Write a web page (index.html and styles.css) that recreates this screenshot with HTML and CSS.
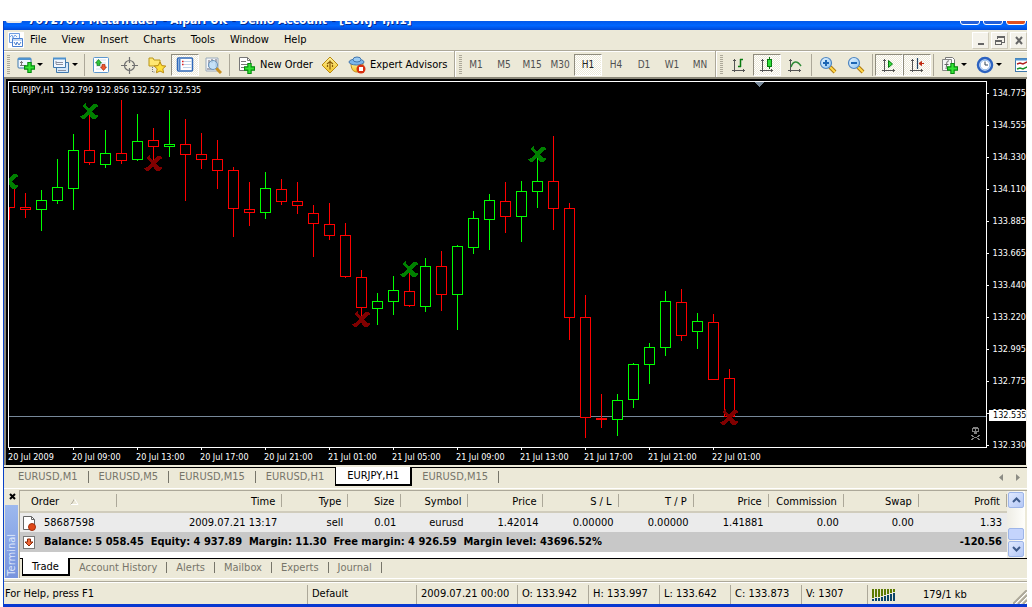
FILE: index.html
```html
<!DOCTYPE html>
<html lang="en">
<head>
<meta charset="utf-8">
<title>MetaTrader - Alpari UK - Demo Account - [EURJPY,H1]</title>
<link rel="stylesheet" href="styles.css">
</head>
<body>
<svg class="defs" aria-hidden="true">
  <defs>
    <linearGradient id="glass" x1="0" y1="0" x2="1" y2="1"><stop offset="0" stop-color="#e8f6ff"/><stop offset="1" stop-color="#8cc4f4"/></linearGradient>
    <linearGradient id="gold" x1="0" y1="0" x2="0" y2="1"><stop offset="0" stop-color="#fff3a0"/><stop offset="1" stop-color="#f0c020"/></linearGradient>
    <symbol id="plus" viewBox="0 0 10 10"><path d="M3.500.5h3v3h3v3h-3v3h-3v-3h-3v-3h3z" fill="#35e535" stroke="#078a10"/></symbol>
    <symbol id="axes" viewBox="0 0 16 16"><path d="M3.500 2v13M1 13.500h13M2 3.500h3M12.500 12v3" fill="none" stroke="#555"/></symbol>
    <symbol id="lens" viewBox="0 0 18 18"><path d="M11 11l5 5" stroke="#b07a10" stroke-width="4"/><path d="M11 11l5 5" stroke="#ffd84a" stroke-width="2"/><circle cx="7" cy="7" r="5.500" fill="url(#glass)" stroke="#4f86c0" stroke-width="1.200"/></symbol>
  </defs>
</svg>
<main class="window">
  <header class="titlebar">
    <span class="app-mark"></span>
    <h1>7072767: MetaTrader - Alpari UK - Demo Account - [EURJPY,H1]</h1>
    <div class="window-buttons">
      <button type="button" aria-label="Minimize"><i></i></button>
      <button type="button" aria-label="Maximize"><i></i></button>
      <button type="button" class="close" aria-label="Close"><i></i></button>
    </div>
  </header>

  <nav class="menubar" aria-label="Main menu">
    <svg class="menu-logo" width="16" height="16" viewBox="0 0 16 16"><rect width="16" height="16" fill="#fff"/><path d="M1.500 1.500h10v9h-10z" fill="#f4f9ff" stroke="#6c9be0"/><path d="M2 5l2-2 1 3 2-3 2 2" fill="none" stroke="#7aa6e6"/><path d="M4.500 6.500h10v8h-10z" fill="#fff" stroke="#4a80d0"/><path d="M5 8h9" stroke="#8ab4ee"/><path d="M6 10l2 3 1-3 2 3 2-3" fill="none" stroke="#4a80d0"/></svg>
    <button type="button">File</button><button type="button">View</button><button type="button">Insert</button><button type="button">Charts</button><button type="button">Tools</button><button type="button">Window</button><button type="button">Help</button>
    <div class="child-buttons">
      <button type="button" aria-label="Minimize chart"><svg width="16" height="16"><path d="M5 11h6" stroke="#666" stroke-width="2"/></svg></button>
      <button type="button" aria-label="Restore chart"><svg width="16" height="16" shape-rendering="crispEdges"><path d="M5 6V4h7v5h-2" fill="none" stroke="#666"/><path d="M5 4h8" stroke="#666" stroke-width="2"/><path d="M3.500 7.500h6v4h-6z" fill="none" stroke="#666"/><path d="M3 8h7" stroke="#666" stroke-width="2"/></svg></button>
      <button type="button" aria-label="Close chart"><svg width="16" height="16"><path d="M5 4l6 7M11 4l-6 7" stroke="#666" stroke-width="2"/></svg></button>
    </div>
  </nav>

  <div class="toolbar" role="toolbar" aria-label="Standard">
    <div class="band">
      <i class="grip"></i>
      <button type="button" class="drop" aria-label="New chart"><svg width="18" height="18"><rect x="1" y="2" width="13" height="10" rx="1" fill="#eef6ff" stroke="#3f78ad"/><path d="M1 3h13" stroke="#4f93cf" stroke-width="2"/><path d="M4.500 5v5M3 9.500h6M3 6.500h3" stroke="#777" fill="none"/><use href="#plus" x="7" y="6" width="11" height="11"/></svg><i class="arrow"></i></button>
      <button type="button" class="drop" aria-label="Profiles"><svg width="18" height="18"><path d="M4.500 6.500h12v10h-12z" fill="#d5e8fa" stroke="#3f78ad"/><path d="M1.500 2.500h12v9h-12z" fill="#eef6ff" stroke="#3f78ad"/><path d="M1 2.500h13" stroke="#4f93cf" stroke-width="2"/><path d="M4 6.500h7M4 5v3M11 8.500h-7M6 14.500h8" stroke="#8a90a0" fill="none"/></svg><i class="arrow"></i></button>
      <i class="rule"></i>
      <button type="button" aria-label="Market Watch"><svg width="18" height="18"><rect x="1.500" y="1.500" width="15" height="15" rx="1" fill="#fff" stroke="#5c97cf"/><path d="M4 4h10M4 7h10M4 10h10M4 13h10" stroke="#cfe0f0"/><path d="M6.500 3.500L9.500 7H8v2.500H5V7H3.500z" fill="#2fc53a" stroke="#147a1c" stroke-width=".7"/><path d="M11.500 14.500L8.500 11H10V8.500h3V11h1.500z" fill="#f05a30" stroke="#a52a10" stroke-width=".7"/></svg></button>
      <button type="button" aria-label="Data Window"><svg width="18" height="18"><circle cx="9.500" cy="9.500" r="5" fill="none" stroke="#707070" stroke-width="1.200"/><path d="M9.500 1v6M9.500 12v6M1 9.500h6M12 9.500h6" stroke="#707070" stroke-width="1.200"/></svg></button>
      <button type="button" aria-label="Navigator"><svg width="18" height="18"><path d="M1 2h4l1 2h6v6H1z" fill="#ffe873" stroke="#b99518"/><path d="M4.500 11v5h3" fill="none" stroke="#777" stroke-dasharray="1 1"/><path d="M12 6l1.800 3.600 4 .5-3 2.700.8 4L12 15l-3.600 1.800.8-4-3-2.700 4-.5z" fill="#ffe13a" stroke="#b98a10"/></svg></button>
      <button type="button" class="on" aria-label="Terminal"><svg width="18" height="18"><rect x="1.500" y="2" width="15" height="13" rx="1" fill="#fff" stroke="#2f68b8" stroke-width="1.500"/><path d="M3.500 3v11" stroke="#4f86cc" stroke-width="2"/><path d="M7 5.500h9M7 8.500h9M7 11.500h9" stroke="#c0d4e8"/><path d="M6 5.500h1.500M6 8.500h1.500" stroke="#e02020" stroke-width="1.500"/></svg></button>
      <button type="button" aria-label="Strategy Tester"><svg width="18" height="18"><path d="M2 2h12v13H2z" fill="#f4f6f8" stroke="#9ab"/><path d="M5 4v7M8 3v4M12 3v8M3 13h5" stroke="#667"/><path d="M12 12l5 5" stroke="#c89020" stroke-width="3"/><circle cx="9" cy="9" r="4.500" fill="#b9dcf8" fill-opacity=".8" stroke="#6b93b8"/></svg></button>
      <i class="rule"></i>
      <button type="button" class="wide"><svg width="18" height="18"><path d="M1.500 1.500h8l3 3v10h-11z" fill="#fff" stroke="#777"/><path d="M9.500 1.500v3h3M3 5.500h5M3 8.500h7M3 11.500h4" stroke="#777" fill="none"/><use href="#plus" x="6" y="7" width="11" height="11"/></svg>New Order</button>
      <button type="button" aria-label="MetaEditor"><svg width="18" height="18"><path d="M9 1l8 8-8 8-8-8z" fill="url(#gold)" stroke="#b98a10"/><path d="M9 4.500v9M6 8l3-2.500L12 8M6.500 9v2M11.500 9v2" fill="none" stroke="#8a5c08" stroke-width="1.200"/></svg></button>
      <button type="button" class="wide expert"><svg width="18" height="18"><path d="M3 7c0 6 2 9 6 9s6-3 6-9z" fill="url(#gold)" stroke="#c08a18"/><ellipse cx="8.500" cy="6" rx="7.500" ry="3" fill="#7cb6ea" stroke="#4276ae"/><ellipse cx="9" cy="3.500" rx="4" ry="2.500" fill="#9bcbf3" stroke="#4276ae"/><circle cx="13" cy="13" r="4.500" fill="#d83010"/><path d="M11 11h4v4h-4z" fill="#fff"/></svg>Expert Advisors</button>
    </div>
    <div class="band periods">
      <i class="grip"></i>
      <button type="button">M1</button><button type="button">M5</button><button type="button">M15</button><button type="button">M30</button><button type="button" class="on">H1</button><button type="button">H4</button><button type="button">D1</button><button type="button">W1</button><button type="button">MN</button>
    </div>
    <div class="band last">
      <i class="grip"></i>
      <button type="button" aria-label="Bar chart"><svg width="16" height="16"><use href="#axes" width="16" height="16"/><path d="M9.500 2v8M9 2.500h3M7 9.500h3" stroke="#087a10" stroke-width="1.500"/></svg></button>
      <button type="button" class="on" aria-label="Candlesticks"><svg width="16" height="16"><use href="#axes" width="16" height="16"/><path d="M10.500 0v12" stroke="#087a10"/><rect x="8.500" y="2.500" width="4" height="7" fill="#30dd38" stroke="#087a10"/></svg></button>
      <button type="button" aria-label="Line chart"><svg width="16" height="16"><use href="#axes" width="16" height="16"/><path d="M4 10c2-6 6-7 10-1" fill="none" stroke="#2e8a36" stroke-width="1.500"/></svg></button>
      <i class="rule"></i>
      <button type="button" aria-label="Zoom in"><svg width="18" height="18"><use href="#lens" width="18" height="18"/><path d="M4 7h6M7 4v6" stroke="#1c66b4" stroke-width="2"/></svg></button>
      <button type="button" aria-label="Zoom out"><svg width="18" height="18"><use href="#lens" width="18" height="18"/><path d="M4 7h6" stroke="#1c66b4" stroke-width="2"/></svg></button>
      <i class="rule"></i>
      <button type="button" class="on" aria-label="Auto scroll"><svg width="16" height="16"><use href="#axes" width="16" height="16"/><path d="M7.500 3.500v7l4-3.500z" fill="#30dd38" stroke="#087a10"/></svg></button>
      <button type="button" class="on" aria-label="Chart shift"><svg width="16" height="16"><use href="#axes" width="16" height="16"/><path d="M8.500 1v11" stroke="#246" stroke-width="1.200"/><path d="M15 6.500h-3M12.500 4.500l-2.500 2 2.500 2z" fill="#c02810" stroke="#c02810"/></svg></button>
      <i class="rule"></i>
      <button type="button" class="drop" aria-label="Indicators"><svg width="18" height="18"><path d="M4.500 1.500h7l2 2v9h-9z" fill="#fff" stroke="#777"/><path d="M1.500 3.500h9v11h-9z" fill="#f4f4f4" stroke="#888"/><path d="M8 5c-3-1-2 4-3 8M3.500 8.500h4" fill="none" stroke="#666"/><use href="#plus" x="6" y="7" width="11" height="11"/></svg><i class="arrow"></i></button>
      <button type="button" class="drop" aria-label="Periodicity"><svg width="18" height="18"><circle cx="9" cy="9" r="7" fill="#e8f3ff" stroke="#2c62c0" stroke-width="2.500"/><circle cx="9" cy="9" r="4.800" fill="#fff" stroke="#8db8ea"/><path d="M9 5.500V9h3" fill="none" stroke="#345"/></svg><i class="arrow"></i></button>
      <button type="button" class="templates" aria-label="Templates"><svg width="18" height="18"><rect x="1.500" y="2.500" width="17" height="13" fill="#fff" stroke="#3f78ad"/><path d="M1 3.500h18" stroke="#4f93cf" stroke-width="2"/><path d="M3 8l3-1 3 1 4-2 5 1" fill="none" stroke="#b02020" stroke-width="1.500"/><path d="M3 13l3-1 3 1 4-2 5 2" fill="none" stroke="#189028" stroke-width="1.500"/></svg></button>
    </div>
  </div>

  <section class="chart" aria-label="EURJPY,H1 chart">
    <div class="plot">
      <svg id="plot" class="candles" shape-rendering="crispEdges"></svg>
      <p class="quote">EURJPY,H1&nbsp; 132.799 132.856 132.527 132.535</p>
      <svg class="skull" width="9" height="13" viewBox="0 0 9 13" shape-rendering="crispEdges"><path d="M2 0h5v1h1v4H6v2H3V5H1V1h1z" fill="#808080"/><path d="M2 2h2v2H2zM5 2h2v2H5z" fill="#000"/><path d="M0 8h2v1h1v1h3V9h1V8h2v1H8v1H6v1h2v1h1v1H7v-1H6v-1H3v1H2v1H0v-1h1v-1h2v-1H1V9H0z" fill="#808080"/></svg>
    </div>
    <div class="prices">
      <span>134.775</span><span>134.555</span><span>134.330</span><span>134.110</span><span>133.885</span><span>133.665</span><span>133.440</span><span>133.220</span><span>132.995</span><span>132.775</span><span>132.555</span><span>132.330</span>
      <b class="last-price">132.535</b>
    </div>
    <div class="times">
      <span>20 Jul 2009</span><span>20 Jul 09:00</span><span>20 Jul 13:00</span><span>20 Jul 17:00</span><span>20 Jul 21:00</span><span>21 Jul 01:00</span><span>21 Jul 05:00</span><span>21 Jul 09:00</span><span>21 Jul 13:00</span><span>21 Jul 17:00</span><span>21 Jul 21:00</span><span>22 Jul 01:00</span>
    </div>
  </section>

  <nav class="tabs chart-tabs" aria-label="Charts">
    <button type="button">EURUSD,M1</button><button type="button">EURUSD,M5</button><button type="button">EURUSD,M15</button><button type="button" class="before-active">EURUSD,H1</button><button type="button" class="active">EURJPY,H1</button><button type="button">EURUSD,M15</button>
    <span class="scroll-arrows"><svg width="24" height="9"><path d="M5 1v7L1 4.500zM18 1v7l4-3.500z" fill="#8c8c84"/></svg></span>
  </nav>

  <section class="terminal">
    <aside class="side">
      <button type="button" aria-label="Close terminal"><svg width="7" height="7"><path d="M1 1l5 5M6 1L1 6" stroke="#000" stroke-width="2"/></svg></button>
      <div class="side-title"><span>Terminal</span></div>
    </aside>
    <div class="terminal-main">
      <div class="grid-area">
        <table class="orders">
          <colgroup><col class="c-order"><col class="c-time"><col class="c-type"><col class="c-size"><col class="c-symbol"><col><col><col><col><col><col><col class="c-profit"></colgroup>
          <thead><tr><th>Order <svg width="9" height="7"><path d="M1 6.500L4.500 1" stroke="#aca899" fill="none"/><path d="M4.500 1L8 6.500H1" stroke="#fff" fill="none"/></svg></th><th>Time</th><th>Type</th><th>Size</th><th>Symbol</th><th>Price</th><th>S / L</th><th>T / P</th><th>Price</th><th>Commission</th><th>Swap</th><th>Profit</th></tr></thead>
          <tbody>
            <tr><td><svg width="14" height="16"><path d="M1.500 1.500h8l3 3v10h-11z" fill="#fff" stroke="#666"/><path d="M9.500 1.500v3h3" fill="none" stroke="#666"/><circle cx="10" cy="12" r="3.500" fill="#e04818" stroke="#a03010"/></svg>58687598</td><td>2009.07.21 13:17</td><td>sell</td><td>0.01</td><td>eurusd</td><td>1.42014</td><td>0.00000</td><td>0.00000</td><td>1.41881</td><td>0.00</td><td>0.00</td><td>1.33</td></tr>
            <tr class="summary"><td colspan="11"><svg width="14" height="14"><rect x="1.500" y="1.500" width="11" height="12" fill="#fff" stroke="#777"/><path d="M5.500 4h3v3h2.500L7 11 3 7h2.500z" fill="#f06838" stroke="#8a2808"/></svg>Balance: 5 058.45&nbsp; Equity: 4 937.89&nbsp; Margin: 11.30&nbsp; Free margin: 4 926.59&nbsp; Margin level: 43696.52%</td><td>-120.56</td></tr>
          </tbody>
        </table>
        <div class="scrollbar">
          <button type="button" aria-label="Scroll up"><svg width="9" height="6"><path d="M1 5l3.500-3.500L8 5" fill="none" stroke="#3d5a8a" stroke-width="2"/></svg></button>
          <i class="thumb"></i>
          <button type="button" aria-label="Scroll down"><svg width="9" height="6"><path d="M1 1l3.500 3.500L8 1" fill="none" stroke="#3d5a8a" stroke-width="2"/></svg></button>
        </div>
      </div>
      <nav class="tabs terminal-tabs" aria-label="Terminal">
        <button type="button" class="active">Trade</button><button type="button">Account History</button><button type="button">Alerts</button><button type="button">Mailbox</button><button type="button">Experts</button><button type="button">Journal</button>
      </nav>
    </div>
  </section>

  <footer class="status">
    <span class="help">For Help, press F1</span><span class="s-profile">Default</span><span class="s-time">2009.07.21 00:00</span><span class="s-price">O: 133.942</span><span class="s-price">H: 133.997</span><span class="s-price">L: 133.642</span><span class="s-price">C: 133.873</span><span class="s-vol">V: 1307</span>
    <span class="s-net"><svg width="24" height="12" shape-rendering="crispEdges"><path d="M0 0h2v9H0zM3 0h2v8H3zM6 0h2v8H6zM9 0h2v7H9zM12 0h2v6h-2zM15 0h2v5h-2zM18 0h2v4h-2zM21 0h2v3h-2z" fill="#5c7a00"/><path d="M0 10h2v2H0zM3 9h2v3H3zM6 9h2v3H6zM9 8h2v4H9zM12 7h2v5h-2zM15 6h2v6h-2zM18 5h2v7h-2zM21 4h2v8h-2z" fill="#0a4468"/></svg>179/1 kb</span>
    <svg class="resize" width="14" height="14"><path d="M0 14L14 0M5 14l9-9M10 14l4-4" stroke="#aca899" stroke-width="2"/><path d="M2 14L14 2M7 14l7-7M12 14l2-2" stroke="#fff"/></svg>
  </footer>
</main>
<script src="chart.js"></script>
</body>
</html>
```

FILE: styles.css
```css
* { box-sizing: border-box; }

body {
  margin: 0;
  background: #fff;
  font: 11px/14px "DejaVu Sans Condensed", "DejaVu Sans", sans-serif;
  color: #000;
}

button {
  margin: 0;
  padding: 0;
  border: 0;
  background: none;
  font: inherit;
  color: inherit;
  white-space: nowrap;
}

svg { display: block; flex: none; }
.defs { position: absolute; width: 0; height: 0; }

.window {
  display: flex;
  flex-direction: column;
  min-height: calc(100vh - 21px);
  margin: 21px 5px 0 3px;
  border-left: 1px solid #0842c8;
  border-bottom: 4px solid #0838d0;
  background: #ece9d8;
  overflow: hidden;
}

/* Title bar */
.titlebar {
  display: flex;
  align-items: flex-end;
  flex: none;
  height: 9px;
  padding: 0 1px 5px 2px;
  overflow: hidden;
  background: linear-gradient(#0458e8, #0066ff 50%, #0048d8);
}
.titlebar h1 {
  margin: 0 0 -3px 6px;
  font: bold 12px/16px "DejaVu Sans Condensed", sans-serif;
  color: #fff;
  white-space: nowrap;
  text-shadow: 1px 1px #062a90;
}
.app-mark { width: 16px; height: 16px; margin-bottom: 2px; border-radius: 2px; background: #e8e8e8; }
.window-buttons { display: flex; gap: 3px; margin-left: auto; }
.window-buttons button { display: flex; align-items: flex-end; justify-content: center; width: 20px; height: 21px; padding-bottom: 4px; border: 1px solid #fff; border-radius: 3px; background: #2460d8; }
.window-buttons i { width: 8px; height: 3px; background: #fff; }
.window-buttons .close { background: #e05020; }

/* Menu */
.menubar {
  display: flex;
  align-items: center;
  flex: none;
  gap: 15px;
  height: 20px;
  padding-left: 4px;
}
.menu-logo { margin-right: -9px; }
.child-buttons { display: flex; gap: 2px; margin-left: auto; }
.child-buttons button { width: 17px; height: 17px; border: 1px solid; border-color: #fff #d0ccbc #d0ccbc #fff; background: #f4f2ea; }

/* Toolbar */
.toolbar {
  display: flex;
  flex: none;
  height: 29px;
  border-top: 1px solid #aca899;
  border-bottom: 2px solid #8a8778;
  box-shadow: inset 0 1px #fff;
}
.band { display: flex; align-items: center; flex: none; width: 451px; padding: 1px 0 0 3px; border-right: 1px solid #aca899; }
.periods { width: 261px; border-left: 1px solid #fff; }
.last { flex: 1 1 0; width: 0; overflow: hidden; border-left: 1px solid #fff; border-right: 0; }
.grip { flex: none; width: 3px; height: 20px; margin-right: 2px; background: repeating-linear-gradient(#aca899 0 1px, #ece9d8 1px 2px); }
.band button { display: flex; align-items: center; justify-content: center; flex: none; width: 28px; height: 22px; }
.band .drop { gap: 2px; width: 35px; }
.band .wide { justify-content: flex-start; gap: 4px; width: 84px; padding-left: 6px; }
.band .expert { width: 106px; padding-left: 4px; }
.band .templates { margin-left: 3px; }
.periods button { font-size: 10px; color: #505050; }
.periods .grip { margin-right: 0; }
.band .on {
  border: 1px solid;
  border-color: #8f8c7e #fff #fff #8f8c7e;
  background: repeating-conic-gradient(#fff 0 25%, #ece9d8 0 50%) 0 0 / 2px 2px;
}
.periods .on { color: #222; }
.rule { flex: none; width: 1px; height: 22px; margin: 0 2px; background: #aca899; }
.arrow { flex: none; border: 3px solid transparent; border-top-color: #000; border-bottom: 0; }

/* Chart */
.chart {
  display: grid;
  grid-template-columns: minmax(0, 1fr) 39px;
  grid-template-rows: minmax(0, 1fr) 17px;
  flex: 1 0 386px;
  padding: 2px 0 0 2px;
  border-left: 2px solid #8a8778;
  border-right: 1px solid #f4f2ea;
  background: #000;
  color: #fff;
  font-size: 9px;
  line-height: 12px;
}
.plot { position: relative; border: 1px solid #fff; overflow: hidden; }
.candles { position: absolute; inset: 0; width: 100%; height: 100%; }
.quote { position: relative; margin: 2px 3px; }
.skull { position: absolute; right: 6px; bottom: 7px; }
.prices { position: relative; grid-row: 1 / 3; grid-column: 2; display: flex; flex-direction: column; gap: 20px; padding-top: 6px; }
.prices span { display: flex; align-items: center; gap: 4px; height: 12px; }
.prices span::before { content: ""; width: 2px; height: 1px; background: #fff; }
.last-price { position: absolute; top: 329px; left: 2px; right: 0; padding-left: 4px; background: #fff; color: #000; font-weight: normal; line-height: 11px; }
.times { display: flex; min-width: 0; overflow: hidden; }
.times span { position: relative; flex: none; width: 64px; padding-top: 3px; white-space: nowrap; }
.times span::before { content: ""; position: absolute; left: 1px; top: 0; width: 1px; height: 2px; background: #fff; }

/* Tab strips */
.tabs { display: flex; align-items: stretch; flex: none; color: #77756a; }
.tabs button { position: relative; padding: 0 10px; }
.tabs button::after { content: ""; position: absolute; right: 0; top: 3px; bottom: 3px; width: 1px; background: #77756a; }
.tabs .active { border: 1px solid #000; border-top: 0; border-right-width: 2px; border-bottom-width: 2px; margin-top: -1px; background: #fff; color: #000; }
.tabs .active::after, .tabs .before-active::after { display: none; }
.chart-tabs { height: 22px; margin-top: 2px; padding: 0 5px 2px 4px; border-top: 1px solid #000; border-bottom: 1px solid #fff; }
.chart-tabs button { padding: 0 11px 0 10px; }
.chart-tabs .active { width: 77px; padding: 1px 0 0; }
.scroll-arrows { margin: 5px 0 0 auto; }

/* Terminal */
.terminal { display: flex; flex: none; margin-top: 1px; border-bottom: 1px solid #fff; }
.side { display: flex; flex-direction: column; flex: none; width: 15px; padding: 3px 0 0 1px; }
.side button { display: flex; justify-content: center; height: 12px; }
.side-title { display: flex; align-items: flex-end; flex: 1; width: 13px; padding-bottom: 2px; background: linear-gradient(#9cb8ee, #7894de); color: #dce6fa; }
.side-title span { writing-mode: vertical-rl; transform: rotate(180deg); line-height: 13px; }
.terminal-main { flex: 1; min-width: 0; border-top: 1px solid #aca899; border-left: 1px solid #aca899; }
.grid-area { display: flex; height: 67px; background: #fff; border-right: 2px solid #ece9d8; }
.orders { flex: 1; align-self: flex-start; width: 0; table-layout: fixed; border-collapse: collapse; }
.orders col { width: 75px; }
.orders .c-order { width: 97px; }
.orders .c-time { width: 165px; }
.orders .c-type { width: 66px; }
.orders .c-size { width: 53px; }
.orders .c-symbol { width: 67px; }
.orders .c-profit { width: 88px; }
.orders th, .orders td { padding: 0 5px 0 0; text-align: right; white-space: nowrap; }
.orders th {
  height: 21px;
  padding: 2px 7px 0 0;
  border-bottom: 2px solid #d0ccbc;
  background: linear-gradient(#aca899, #aca899) 100% 3px / 1px 13px no-repeat #ece9d8;
  font-weight: normal;
}
.orders th:first-child, .orders td:first-child { text-align: left; }
.orders th:first-child { padding-left: 11px; }
.orders th svg { display: inline-block; margin-left: 8px; }
.orders td:first-child { padding-left: 2px; }
.orders td svg { display: inline-block; margin-right: 8px; vertical-align: middle; }
.orders td { height: 20px; background: #ebebeb; line-height: 16px; }
.orders .summary td { background: #c8c8c8; font-weight: bold; }
.scrollbar { display: flex; flex-direction: column; flex: none; width: 18px; padding: 1px; background: linear-gradient(90deg, #eeede5, #fefefb); }
.scrollbar button { display: flex; align-items: center; justify-content: center; height: 16px; border: 1px solid #9db5e8; border-radius: 2px; background: linear-gradient(135deg, #e0e9ff, #b4c8f6); }
.thumb { height: 12px; margin: auto 0 1px; border: 1px solid #9db5e8; border-radius: 2px; background: #c4d4fc; }
.terminal-tabs { height: 20px; padding: 0 0 2px 2px; border-top: 1px solid #000; }
.terminal-tabs button { padding: 0 10px 0 9px; }
.terminal-tabs .active { width: 48px; padding: 1px 0 0; }

/* Status bar */
.status { position: relative; display: flex; flex: none; height: 23px; margin-top: 2px; padding-top: 3px; border-top: 1px solid #aca899; box-shadow: inset 0 1px #fff; line-height: 18px; }
.status span { flex: none; padding-left: 4px; border-left: 1px solid #aca899; white-space: nowrap; }
.status .help { flex: 1 1 0; padding-left: 1px; border-left: 0; }
.s-profile { width: 109px; }
.s-time { width: 101px; }
.s-price { width: 71px; }
.s-vol { width: 66px; }
.status .s-net { display: flex; align-items: center; gap: 27px; width: 160px; }
.resize { position: absolute; right: 0; bottom: 0; }
```

FILE: chart.js
```js
// Each candle: centre x, high, body top, body bottom, low, direction.
const candles = [
  [9, 184, 184, 207, 219, 'r'], [25, 193, 207, 209, 217, 'r'], [41, 190, 200, 209, 230, 'g'],
  [57, 159, 187, 200, 203, 'g'], [73, 134, 150, 188, 209, 'g'], [89, 110, 150, 162, 164, 'r'],
  [105, 130, 153, 164, 167, 'g'], [121, 100, 153, 160, 163, 'r'], [137, 114, 141, 159, 160, 'g'],
  [153, 128, 140, 146, 162, 'r'], [169, 110, 144, 146, 156, 'g'], [185, 119, 144, 154, 200, 'r'],
  [201, 133, 154, 159, 168, 'r'], [217, 140, 159, 170, 188, 'r'], [233, 167, 170, 208, 236, 'r'],
  [249, 182, 209, 212, 225, 'r'], [265, 172, 188, 212, 218, 'g'], [281, 179, 189, 201, 204, 'r'],
  [297, 182, 201, 205, 213, 'r'], [313, 205, 213, 223, 256, 'r'], [329, 203, 224, 235, 239, 'r'],
  [345, 223, 235, 276, 277, 'r'], [361, 270, 277, 307, 316, 'r'], [377, 293, 301, 308, 324, 'g'],
  [393, 276, 290, 301, 314, 'g'], [409, 270, 291, 305, 306, 'r'], [425, 258, 266, 306, 311, 'g'],
  [441, 251, 266, 294, 310, 'r'], [457, 245, 246, 294, 329, 'g'], [473, 211, 218, 247, 253, 'g'],
  [489, 194, 200, 219, 249, 'g'], [505, 182, 201, 216, 232, 'r'], [521, 181, 191, 216, 241, 'g'],
  [537, 156, 181, 191, 207, 'g'], [553, 136, 181, 208, 229, 'r'], [569, 203, 208, 317, 339, 'r'],
  [585, 295, 317, 417, 437, 'r'], [601, 394, 418, 419, 427, 'r'], [617, 394, 400, 419, 435, 'g'],
  [633, 363, 364, 399, 407, 'g'], [649, 343, 347, 364, 383, 'g'], [665, 291, 301, 347, 355, 'g'],
  [681, 289, 302, 335, 340, 'r'], [697, 313, 321, 331, 348, 'g'], [713, 314, 322, 379, 379, 'r'],
  [729, 369, 378, 416, 416, 'r']
];
const marks = [
  [89, 111, '#008000'], [9, 181, '#008000'], [409, 269, '#008000'], [537, 154, '#008000'],
  [153, 163, '#800000'], [361, 319, '#800000'], [729, 417, '#800000']
];
const colours = { r: '#ff0000', g: '#00ff00' };

let out = '<rect x="0" y="334" width="100%" height="1" fill="#778899"/>';
out += '<g transform="translate(-9 -82)">';
out += '<path d="M754 82h10l-5 5z" fill="#778899"/>';
for (const [x, high, top, bottom, low, dir] of candles) {
  out += `<g fill="${colours[dir]}"><rect x="${x}" y="${high}" width="1" height="${low - high + 1}"/>` +
    `<rect x="${x - 5}" y="${top}" width="11" height="${bottom - top + 1}"/></g>`;
  if (bottom - top > 1) {
    out += `<rect x="${x - 4}" y="${top + 1}" width="9" height="${bottom - top - 1}" fill="#000"/>`;
  }
}
for (const [x, y, fill] of marks) {
  out += `<path transform="translate(${x} ${y})" fill="${fill}" d="M-6-6l3-3 0 3 3 4 4-5 4 0 1 2-1 1-5 4 3 4 3 0 0 1-2 3-4 0-3-5-4 5-2 0-3-2 0-1 3-1 4-4-3-3z"/>`;
}
out += '</g>';
document.getElementById('plot').innerHTML = out;
```
